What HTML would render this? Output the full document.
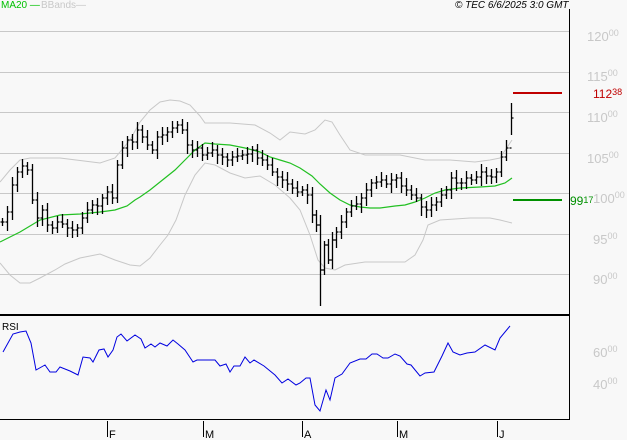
<!DOCTYPE html>
<html><head><meta charset="utf-8"><style>
html,body{margin:0;padding:0;background:#f8f8f8;width:627px;height:440px;overflow:hidden;font-family:"Liberation Sans",sans-serif}
svg{display:block}
</style></head><body>
<svg id="s" width="627" height="440" xmlns="http://www.w3.org/2000/svg" font-family="Liberation Sans, sans-serif">
<rect width="627" height="440" fill="#f8f8f8"/>
<g stroke="#c8c8c8" stroke-width="1">
<line x1="0" y1="31.5" x2="569" y2="31.5"/><line x1="0" y1="72.5" x2="569" y2="72.5"/><line x1="0" y1="112.5" x2="569" y2="112.5"/><line x1="0" y1="153.5" x2="569" y2="153.5"/><line x1="0" y1="193.5" x2="569" y2="193.5"/><line x1="0" y1="234.5" x2="569" y2="234.5"/><line x1="0" y1="274.5" x2="569" y2="274.5"/>
</g>
<g fill="#c8c8c8" font-size="13">
<text x="587" y="41">120<tspan font-size="9" dy="-5">00</tspan></text>
<text x="587" y="81">115<tspan font-size="9" dy="-5">00</tspan></text>
<text x="587" y="122">110<tspan font-size="9" dy="-5">00</tspan></text>
<text x="587" y="163">105<tspan font-size="9" dy="-5">00</tspan></text>
<text x="593" y="203">100<tspan font-size="9" dy="-5">00</tspan></text>
<text x="593" y="244">95<tspan font-size="9" dy="-5">00</tspan></text>
<text x="593" y="284">90<tspan font-size="9" dy="-5">00</tspan></text>
<text x="593" y="357">60<tspan font-size="9" dy="-5">00</tspan></text>
<text x="593" y="389">40<tspan font-size="9" dy="-5">00</tspan></text>
</g>
<polyline fill="none" stroke="#c8c8c8" stroke-width="1" points="0,182 10,170 20,160 30,158 60,158 100,163 115,158 130,140 140,122 150,110 160,102 170,100 180,101 190,105 200,116 205,123 230,123 255,125 270,133 280,140 290,132 305,134 315,130 325,120 332,122 340,135 350,150 365,155 400,155 425,160 450,160 475,162 490,160 500,158 512,140"/>
<polyline fill="none" stroke="#c8c8c8" stroke-width="1" points="0,263 10,275 20,283 30,283 40,278 55,270 65,264 80,258 100,254 115,260 130,265 140,266 150,258 160,245 168,235 176,220 185,195 195,175 205,163 215,165 230,173 245,178 260,176 275,185 290,198 300,210 310,235 318,260 325,268 335,270 345,265 365,262 405,262 415,255 423,240 428,225 440,220 470,218 490,218 500,220 512,223"/>
<polyline id="ma" fill="none" stroke="#22c022" stroke-width="1.2" points="0,242 10,237 20,232 30,226 40,220 60,215 80,214 100,212 115,210 127,206 135,200 140,197 150,190 160,182 175,170 185,160 195,150 205,143 215,144 230,145 245,148 260,152 270,157 280,160 290,163 300,168 312,176 320,184 330,193 340,200 350,205 360,207 370,208 380,208 395,206 405,205 415,202 425,198 435,193 445,190 460,188 480,187 495,186 505,183 512,178"/>
<g id="bars" stroke="#000" stroke-width="1.3" fill="none"></g>
<line x1="513" y1="93" x2="562" y2="93" stroke="#c00000" stroke-width="2"/>
<line x1="513" y1="200" x2="562" y2="200" stroke="#009000" stroke-width="2"/>
<text x="593" y="98" fill="#c00000" font-size="12">112<tspan font-size="9" dy="-3">38</tspan></text>
<text x="570" y="205" fill="#009000" font-size="12">99<tspan font-size="9" dy="-2">17</tspan></text>
<line x1="569.5" y1="9" x2="569.5" y2="420" stroke="#000" stroke-width="1"/>
<line x1="0" y1="315" x2="569" y2="315" stroke="#000" stroke-width="2"/>
<line x1="0" y1="419.5" x2="569" y2="419.5" stroke="#000" stroke-width="1"/>
<text x="1" y="8" fill="#00c000" font-size="10">MA20 —</text>
<text x="41" y="8" fill="#c8c8c8" font-size="10">BBands—</text>
<text x="455" y="8" fill="#000" font-size="10" font-style="italic">© TEC 6/6/2025 3:0 GMT</text>
<text x="2" y="330" fill="#000" font-size="10">RSI</text>
<polyline fill="none" stroke="#0000e0" stroke-width="1" points="3,352 13,334 20,332 26,331 31,343 36,370 45,365 50,372 56,372 60,367 70,371 78,375 83,357 90,358 93,362 99,350 104,349 108,357 113,350 117,337 121,334 127,341 135,335 141,339 145,348 151,344 155,347 160,343 167,346 173,340 178,344 185,350 193,362 197,360 206,360 215,360 220,366 226,364 230,372 234,366 240,366 245,357 250,363 254,360 264,366 275,375 282,383 288,379 296,385 300,383 306,378 310,378 315,405 320,411 326,390 330,400 335,378 342,374 350,363 360,359 366,359 372,354 377,354 383,358 388,358 395,354 400,356 407,364 411,365 420,376 425,373 434,372 442,356 448,343 453,352 460,355 467,353 475,352 485,345 495,350 500,338 510,326"/>
<g stroke="#000" stroke-width="1">
<line x1="107.5" y1="421" x2="107.5" y2="437"/><line x1="203.5" y1="421" x2="203.5" y2="437"/><line x1="302.5" y1="421" x2="302.5" y2="437"/><line x1="397.5" y1="421" x2="397.5" y2="437"/><line x1="497.5" y1="421" x2="497.5" y2="437"/>
</g>
<g font-size="11" fill="#000">
<text x="109" y="438">F</text><text x="205" y="438">M</text><text x="304" y="438">A</text><text x="399" y="438">M</text><text x="499" y="438">J</text>
</g>
</svg>
<script>
var pts=[[2,222],[7,212],[12,185],[17,172],[22,166],[27,170],[32,200],[37,218],[42,210],[47,225],[52,228],[57,222],[62,224],[67,228],[72,230],[77,228],[82,218],[87,210],[92,205],[97,206],[102,198],[107,192],[112,198],[117,165],[122,148],[127,140],[132,142],[137,130],[142,137],[147,145],[152,150],[157,137],[162,135],[167,132],[172,128],[177,125],[182,130],[187,145],[192,150],[197,148],[202,155],[207,153],[212,150],[217,155],[222,157],[227,160],[232,157],[237,156],[242,155],[247,154],[252,150],[257,158],[262,160],[267,165],[272,172],[277,177],[282,180],[287,184],[292,188],[297,192],[302,190],[307,195],[312,215],[316,225],[320,270],[324,245],[328,260],[332,240],[336,232],[341,222],[346,212],[351,206],[356,204],[361,198],[366,190],[371,183],[376,182],[381,180],[386,184],[391,180],[396,178],[401,186],[406,190],[411,195],[416,198],[421,207],[426,210],[431,205],[436,202],[441,195],[446,190],[451,178],[456,183],[461,183],[466,178],[471,180],[476,177],[481,172],[486,176],[491,177],[496,172],[501,157],[506,148],[511,118]];
var s="";
for(var i=0;i<pts.length;i++){var x=pts[i][0]+.5,c=pts[i][1],p=i?pts[i-1][1]:c;var hi=Math.min(c,p)-4-((i*7)%5),lo=Math.max(c,p)+4+((i*5)%6);if(i==pts.length-1){hi=103;lo=135;}if(x>319&&x<321){hi=215;lo=306;}
s+="M"+x+" "+hi+"V"+lo+"M"+(x-2)+" "+p+"H"+x+"M"+x+" "+c+"H"+(x+2);}
document.getElementById("bars").innerHTML='<path d="'+s+'"/>';
</script>
</body></html>
